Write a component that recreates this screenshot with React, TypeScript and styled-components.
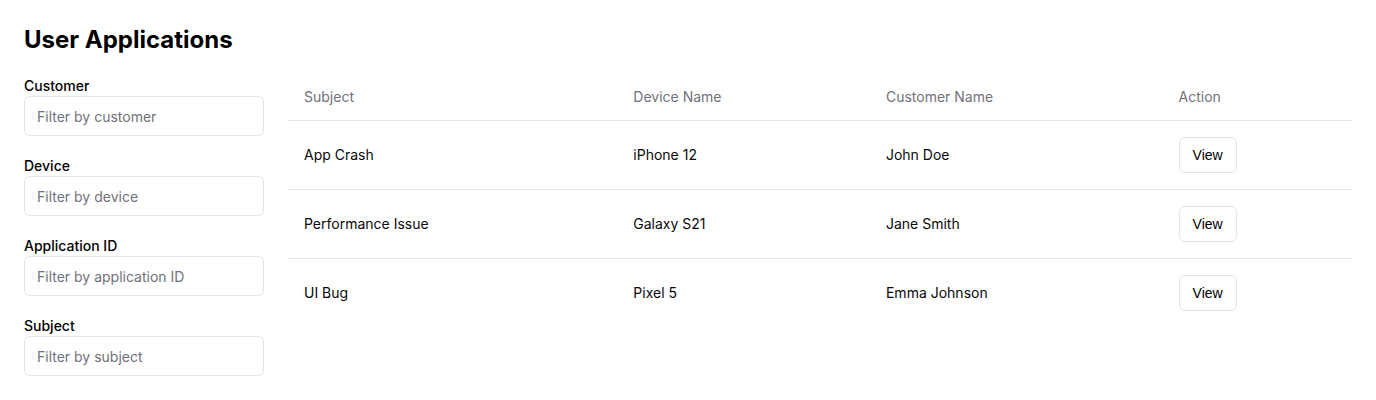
import React from "react";
import styled, { createGlobalStyle } from "styled-components";

type Application = {
  subject: string;
  device: string;
  customer: string;
};

const applications: Application[] = [
  { subject: "App Crash", device: "iPhone 12", customer: "John Doe" },
  { subject: "Performance Issue", device: "Galaxy S21", customer: "Jane Smith" },
  { subject: "UI Bug", device: "Pixel 5", customer: "Emma Johnson" },
];

const filters = [
  { label: "Customer", placeholder: "Filter by customer" },
  { label: "Device", placeholder: "Filter by device" },
  { label: "Application ID", placeholder: "Filter by application ID" },
  { label: "Subject", placeholder: "Filter by subject" },
];

const App = () => {
  return (
    <>
      <GlobalStyle />
      <Page>
        <Title>User Applications</Title>
        <Layout>
          <Sidebar>
            {filters.map((f) => (
              <Field key={f.label}>
                <Label>{f.label}</Label>
                <Input placeholder={f.placeholder} />
              </Field>
            ))}
          </Sidebar>
          <Table>
            <thead>
              <tr>
                <Th>Subject</Th>
                <Th>Device Name</Th>
                <Th>Customer Name</Th>
                <Th>Action</Th>
              </tr>
            </thead>
            <tbody>
              {applications.map((a, i) => (
                <Row key={a.subject} $last={i === applications.length - 1}>
                  <Td>{a.subject}</Td>
                  <Td>{a.device}</Td>
                  <Td>{a.customer}</Td>
                  <Td>
                    <ViewButton>View</ViewButton>
                  </Td>
                </Row>
              ))}
            </tbody>
          </Table>
        </Layout>
      </Page>
    </>
  );
};

const GlobalStyle = createGlobalStyle`
  body {
    margin: 0;
    background: #ffffff;
    font-family: Inter, "Noto Sans", sans-serif;
    color: #09090b;
  }
`;

const Page = styled.div`
  padding: 24px;
`;

const Title = styled.h1`
  margin: 0 0 16px;
  font-size: 24px;
  line-height: 32px;
  font-weight: 700;
  color: #000;
`;

const Layout = styled.div`
  display: flex;
  gap: 24px;
  align-items: flex-start;
`;

const Sidebar = styled.div`
  width: 240px;
  flex-shrink: 0;
  display: flex;
  flex-direction: column;
  gap: 16px;
`;

const Field = styled.div`
  display: flex;
  flex-direction: column;
`;

const Label = styled.label`
  font-size: 14px;
  line-height: 24px;
  font-weight: 500;
  color: #000;
  margin-top: 2px;
  margin-bottom: -2px;
`;

const Input = styled.input`
  box-sizing: border-box;
  height: 40px;
  width: 100%;
  padding: 0 12px;
  border: 1px solid #e4e4e7;
  border-radius: 6px;
  font-family: Inter, "Noto Sans", sans-serif;
  font-size: 14px;
  background: #fff;
  outline: none;
  &::placeholder {
    color: #71717a;
  }
`;

const Table = styled.table`
  flex: 1;
  border-collapse: collapse;
  font-size: 14px;
`;

const Th = styled.th`
  height: 48px;
  padding: 0 16px;
  text-align: left;
  font-weight: 400;
  color: #71717a;
  border-bottom: 1px solid #e4e4e7;
`;

const Row = styled.tr<{ $last: boolean }>`
  border-bottom: ${(p) => (p.$last ? "none" : "1px solid #e4e4e7")};
`;

const Td = styled.td`
  padding: 16px;
  line-height: 20px;
  color: #09090b;
`;

const ViewButton = styled.button`
  height: 36px;
  padding: 0 13px;
  border: 1px solid #e4e4e7;
  border-radius: 6px;
  background: #fff;
  font-family: "Liberation Sans", Arial, sans-serif;
  font-size: 14px;
  font-weight: 400;
  color: #000;
  cursor: pointer;
`;

export default App;
